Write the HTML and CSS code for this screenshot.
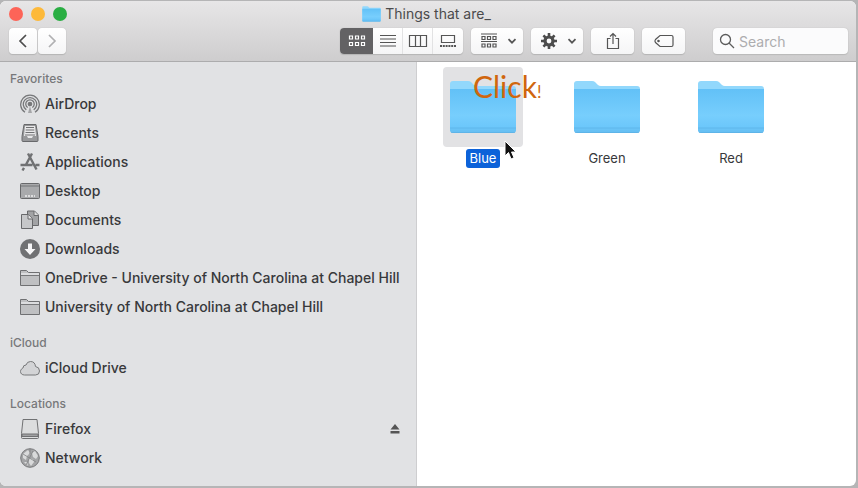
FILE: index.html
```html
<!DOCTYPE html>
<html lang="en">
<head>
<meta charset="utf-8">
<title>Things that are_</title>
<link rel="stylesheet" href="styles.css">
</head>
<body>
<svg class="defs" aria-hidden="true">
  <defs>
    <linearGradient id="front" x1="0" y1="0" x2="0" y2="1">
      <stop offset="0" stop-color="#62c1f7"/>
      <stop offset=".6" stop-color="#77cefd"/>
      <stop offset=".86" stop-color="#6cc7fb"/>
      <stop offset="1" stop-color="#65bdf0"/>
    </linearGradient>
    <symbol id="folder" viewBox="0 0 68 54">
      <path d="M1 4q0-3 3-3h15q2 0 3 1l3 3q1 1 3 1h36q3 0 3 3v42H1z" fill="#92d8fc"/>
      <path d="M1 9h66v41q0 3-3 3H4q-3 0-3-3z" fill="url(#front)"/>
      <path d="M1 48h66M2 52.500h64" stroke="#58aee2" fill="none" opacity=".6"/>
    </symbol>
    <symbol id="side-folder" viewBox="0 0 20 20">
      <path d="M.5 17.500V2.500h6l2 2h11v13z" fill="#bfc0c2" stroke="#6f7072"/>
      <path d="M1 5h18v2H1z" fill="#dcdddf"/>
      <path d="M1 7.500h18" stroke="#77787a"/>
    </symbol>
    <symbol id="chevron" viewBox="0 0 10 8">
      <path d="M1.500 2.200 5 5.700l3.500-3.500" fill="none" stroke="#555" stroke-width="1.700"/>
    </symbol>
  </defs>
</svg>
<div class="window">
  <header class="titlebar">
    <div class="title-row">
      <div class="lights">
        <button class="light close" aria-label="Close"></button>
        <button class="light minimize" aria-label="Minimize"></button>
        <button class="light maximize" aria-label="Zoom"></button>
      </div>
      <h1 class="title"><svg class="title-icon" viewBox="0 0 68 54" preserveAspectRatio="none"><use href="#folder"/></svg>Things that are_</h1>
    </div>
    <div class="toolbar">
      <div class="nav">
        <button class="btn nav-btn" aria-label="Back"><svg width="12" height="16" viewBox="0 0 12 16" fill="none" stroke="#4d4d4d" stroke-width="1.700"><path d="M9 2 3 8l6 6"/></svg></button>
        <button class="btn nav-btn" aria-label="Forward"><svg width="12" height="16" viewBox="0 0 12 16" fill="none" stroke="#b0b0b2" stroke-width="1.700"><path d="m3 2 6 6-6 6"/></svg></button>
      </div>
      <div class="tools">
        <div class="views">
          <button class="view active" aria-label="Icon view"><svg width="18" height="14" viewBox="0 0 18 14" fill="none" stroke="#fff" stroke-width="1.200"><path d="M1.500 2h3v3h-3zM7.500 2h3v3h-3zM13.500 2h3v3h-3zM1.500 8.500h3v3h-3zM7.500 8.500h3v3h-3zM13.500 8.500h3v3h-3z"/></svg></button>
          <button class="view" aria-label="List view"><svg width="18" height="14" viewBox="0 0 18 14" stroke="#555"><path d="M1 1.500h16M1 5h16M1 8.500h16M1 12h16"/></svg></button>
          <button class="view" aria-label="Column view"><svg width="20" height="14" viewBox="0 0 20 14" fill="none" stroke="#555" stroke-width="1.200"><path d="M1.500 1.500h17v11h-17zM7.500 1.500v11M12.500 1.500v11"/></svg></button>
          <button class="view" aria-label="Gallery view"><svg width="18" height="14" viewBox="0 0 18 14" fill="none" stroke="#555" stroke-width="1.200"><path d="M2.500 1.500h13v7h-13z"/><path d="M1 12h16" stroke-width="2" stroke-dasharray="2 .8"/></svg></button>
        </div>
        <button class="btn menu-btn" aria-label="Group items"><svg width="18" height="16" viewBox="0 0 18 16" fill="none" stroke="#555" stroke-width="1.200"><path d="M1 1h16M1 8.500h16"/><path d="M2 3.500h3v3H2zM7.500 3.500h3v3h-3zM13 3.500h3v3h-3zM2 11h3v3H2zM7.500 11h3v3h-3zM13 11h3v3h-3z"/></svg><svg width="10" height="8"><use href="#chevron"/></svg></button>
        <button class="btn menu-btn" aria-label="Actions"><svg width="18" height="16" viewBox="-9 -8 18 16" fill="none" stroke="#4d4d4d"><circle r="4" stroke-width="3.200"/><path d="M0-8V-5M0 5V8M-8 0H-5M5 0H8M-5.600-5.600-3.500-3.500M5.600-5.600 3.500-3.500M-5.600 5.600-3.500 3.500M5.600 5.600 3.500 3.500" stroke-width="2.600"/></svg><svg width="10" height="8"><use href="#chevron"/></svg></button>
        <button class="btn action-btn" aria-label="Share"><svg width="16" height="18" viewBox="0 0 16 18" fill="none" stroke="#555" stroke-width="1.200"><path d="M5.500 6.500h-3v10h11v-10h-3M8 12V1.500M5 4.500l3-3 3 3"/></svg></button>
        <button class="btn action-btn" aria-label="Edit tags"><svg width="20" height="14" viewBox="0 0 20 14" fill="none" stroke="#555" stroke-width="1.200"><path d="M6 1.500h11.500q1.500 0 1.500 1.500v8q0 1.500-1.500 1.500H6L1.500 8.500q-1-1.500 0-3z"/><circle cx="4.500" cy="7" r=".7"/></svg></button>
      </div>
      <label class="search"><svg width="16" height="16" viewBox="0 0 16 16" fill="none" stroke="#5c5c5c" stroke-width="1.300"><circle cx="6.500" cy="6.500" r="5"/><path d="m10 10 5 5"/></svg><input type="search" placeholder="Search" aria-label="Search"></label>
    </div>
  </header>
  <div class="body">
    <nav class="sidebar">
      <section>
        <h2>Favorites</h2>
        <a href="#"><svg viewBox="0 0 20 20" fill="none" stroke="#77787a" stroke-width="1.300"><path d="M5 18.300a9.300 9.300 0 1 1 10 0M6.300 15.900a6.700 6.700 0 1 1 7.400 0M7.700 13.500a4.200 4.200 0 1 1 4.600 0"/><circle cx="10" cy="10" r="1.700" fill="#77787a"/><path d="m10 12-2 7h4z" fill="#a5a6a8" stroke="none"/></svg>AirDrop</a>
        <a href="#"><svg viewBox="0 0 20 20"><path d="M4 1.500h12l2 12v4q0 1-1 1H3q-1 0-1-1v-4z" fill="#97989a" stroke="#68696b"/><path d="M5 3h10l1 10h-3l-1 2H8l-1-2H4z" fill="#e8e8e9"/><path d="M6 4.500h8M5.700 7h8.600M5.500 9.500h9M5 12h10" stroke="#707173"/></svg>Recents</a>
        <a href="#"><svg viewBox="0 0 20 20" fill="none" stroke="#707173" stroke-width="2.400"><path d="M8 1.500 16.500 17.500M12 1.500 5.500 13.500M.5 13h12M15.500 13h4M4 15.800l-1.500 2.700"/></svg>Applications</a>
        <a href="#"><svg viewBox="0 0 20 20"><rect x=".5" y="2.500" width="19" height="15" rx="1" fill="#a9aaac" stroke="#68696b"/><path d="M1 5h18" stroke="#737476"/><path d="M5 15h10" stroke="#eee" stroke-width="1.500" stroke-dasharray="2 1"/></svg>Desktop</a>
        <a href="#"><svg viewBox="0 0 20 20"><path d="M7.500 1h7l4 4v10.500h-11z" fill="#a2a3a5" stroke="#68696b"/><path d="M14 1v4.500h4.500" fill="#ddd" stroke="#68696b"/><path d="M1.500 4.500h7l4 4v10h-11z" fill="#c6c7c9" stroke="#68696b"/><path d="M8 4.500V9h4.500" fill="#e3e3e4" stroke="#68696b"/></svg>Documents</a>
        <a href="#"><svg viewBox="0 0 20 20"><circle cx="10" cy="10" r="10" fill="#707173"/><path d="M8 4.500h4V10h3.500L10 16 4.500 10H8z" fill="#f5f5f6"/></svg>Downloads</a>
        <a href="#"><svg><use href="#side-folder"/></svg>OneDrive - University of North Carolina at Chapel Hill</a>
        <a href="#"><svg><use href="#side-folder"/></svg>University of North Carolina at Chapel Hill</a>
      </section>
      <section>
        <h2>iCloud</h2>
        <a href="#"><svg viewBox="0 0 20 20"><path d="M4.500 17C2 17 .5 15.500.5 13.500S2 10.500 3 10q0-3 3-3 1-3.500 4.500-3.500 4.500 0 5 5 4 .5 4 4.500 0 4-4 4z" fill="#d3d4d6" stroke="#77787a"/></svg>iCloud Drive</a>
      </section>
      <section>
        <h2>Locations</h2>
        <a href="#"><svg viewBox="0 0 20 20"><path d="M3 .5h14l1.500 14v4q0 1-1 1h-15q-1 0-1-1v-4z" fill="#dcddde" stroke="#707173"/><path d="M2 15h16v2.500H2z" fill="#a0a1a3" stroke="#707173"/></svg>Firefox<span class="eject"><svg viewBox="0 0 10 10" fill="#555"><path d="M5 0l4.500 5.500h-9zM.5 7h9v2.500h-9z"/></svg></span></a>
        <a href="#"><svg viewBox="0 0 20 20"><circle cx="10" cy="10" r="9.300" fill="#a3a4a6" stroke="#77787a"/><path d="M3 6 8 2l2 3-3 3-1 4-3-2zM12 5l3-2 3 5-2 3-3-2zM9 10l4 1 1 3-3 4-2-3zM4 14l3 0 1 4z" fill="#d9dadb"/><path d="m3 6 13 8M6 17 13 3M10 1v5" stroke="#808183" stroke-width=".8"/></svg>Network</a>
      </section>
    </nav>
    <main class="files">
      <button class="file selected"><span class="thumb"><svg><use href="#folder"/></svg></span><span class="name">Blue</span><span class="click">Click<small>!</small></span>
        <svg class="pointer" viewBox="0 0 14 20"><path d="M1 1v15l3.500-3.500L7 19l3-1.300L7.500 12H12z" fill="#111" stroke="#fff"/></svg></button>
      <button class="file"><span class="thumb"><svg><use href="#folder"/></svg></span><span class="name">Green</span></button>
      <button class="file"><span class="thumb"><svg><use href="#folder"/></svg></span><span class="name">Red</span></button>
    </main>
  </div>
</div>
</body>
</html>
```
FILE: styles.css
```css
* { box-sizing: border-box; }

body {
  margin: 0;
  min-height: 100vh;
  display: flex;
  padding: 1px 2px 2px 0;
  background: #b5b5b6;
  font-family: Inter, "Liberation Sans", sans-serif;
  font-size: 14px;
  color: #38393b;
}

button, input { font: inherit; color: inherit; }
button { border: 0; padding: 0; background: none; }
svg { display: block; flex: none; }
.defs { position: absolute; width: 0; height: 0; }

.window {
  flex: 1;
  min-width: 0;
  display: flex;
  flex-direction: column;
  overflow: hidden;
  border-radius: 6px;
  background: #fff;
}

.titlebar {
  background: linear-gradient(#e7e6e7, #cecdce);
  border-bottom: 1px solid #acacad;
  padding: 2px 8px 7px 9px;
}

.title-row {
  display: grid;
  grid-template-columns: 1fr auto 1fr;
  align-items: center;
  height: 25px;
  padding: 0 4px 3px 0;
}
.lights { display: flex; gap: 8px; }
.light { width: 14px; height: 14px; border-radius: 50%; }
.close { background: #fd6458; }
.minimize { background: #fdb93a; }
.maximize { background: #2aae43; }

.title {
  display: flex;
  align-items: center;
  gap: 4px;
  margin: 0;
  font-size: 14px;
  line-height: 20px;
  font-weight: 400;
  color: #4b4b4c;
}
.title-icon { width: 19px; height: 16px; }

.toolbar { display: flex; align-items: center; }
.nav { display: flex; gap: 1px; }

.btn {
  display: flex;
  align-items: center;
  justify-content: center;
  height: 26px;
  border-radius: 4px;
  background: linear-gradient(#fff, #f5f5f6);
  box-shadow: 0 0 1px #aaa, 0 1px 1px #b5b5b5;
}
.nav-btn { width: 28px; }
.menu-btn { width: 52px; gap: 9px; padding-left: 3px; }
.action-btn { width: 43px; }

.tools { display: flex; gap: 8px; margin-left: auto; }
.views {
  display: flex;
  height: 26px;
  overflow: hidden;
  border-radius: 4px;
  background: linear-gradient(#fff, #f5f5f6);
  box-shadow: 0 0 1px #aaa, 0 1px 1px #b5b5b5;
}
.view {
  display: flex;
  align-items: center;
  justify-content: center;
  width: 30px;
  border-right: 1px solid #e2e2e3;
}
.view:last-child { border-right: 0; }
.view.active { width: 33px; border: 0; background: #636264; }

.search {
  display: flex;
  align-items: center;
  gap: 4px;
  width: 135px;
  height: 26px;
  margin-left: 28px;
  padding: 0 6px;
  border-radius: 4px;
  background: #fbfbfc;
  box-shadow: 0 0 1px #aaa, 0 1px 1px #bbb;
}
.search input {
  flex: 1;
  min-width: 0;
  padding: 0;
  border: 0;
  outline: 0;
  background: none;
}
.search input::placeholder { color: #adadaf; opacity: 1; }

.body { flex: 1; display: flex; }

.sidebar {
  flex: none;
  display: flex;
  flex-direction: column;
  gap: 12px;
  width: 417px;
  padding: 7px 16px 14px 10px;
  background: #e1e2e4;
  border-right: 1px solid #ceced0;
}
.sidebar h2 {
  margin: 0;
  font-size: 12px;
  line-height: 20px;
  font-weight: 500;
  color: #77787a;
}
.sidebar a {
  display: flex;
  align-items: center;
  gap: 5px;
  height: 29px;
  padding-left: 10px;
  font-weight: 450;
  color: inherit;
  text-decoration: none;
  white-space: nowrap;
}
.sidebar a > svg { width: 20px; height: 20px; }
.eject { margin-left: auto; }
.eject svg { width: 10px; height: 10px; }

.files {
  flex: 1;
  display: grid;
  grid-template-columns: repeat(auto-fill, 124px);
  align-content: start;
  padding: 5px 4px;
}
.file {
  position: relative;
  display: flex;
  flex-direction: column;
  align-items: center;
  gap: 2px;
  font-size: 13px;
}
.thumb {
  display: grid;
  place-items: center;
  width: 80px;
  height: 80px;
  border-radius: 4px;
}
.thumb svg { width: 68px; height: 54px; }
.name { padding: 0 4px; border-radius: 3px; line-height: 19px; }
.selected .thumb { background: #e2e2e4; }
.selected .name { background: #0c62d9; color: #fff; }

.click {
  position: absolute;
  left: 52px;
  top: 1px;
  font-family: Lato, sans-serif;
  font-size: 30px;
  line-height: 36px;
  color: #d0660e;
}
.click small { font-size: 17px; }
.pointer {
  position: absolute;
  left: 83px;
  top: 73px;
  width: 14px;
  height: 20px;
}
```
